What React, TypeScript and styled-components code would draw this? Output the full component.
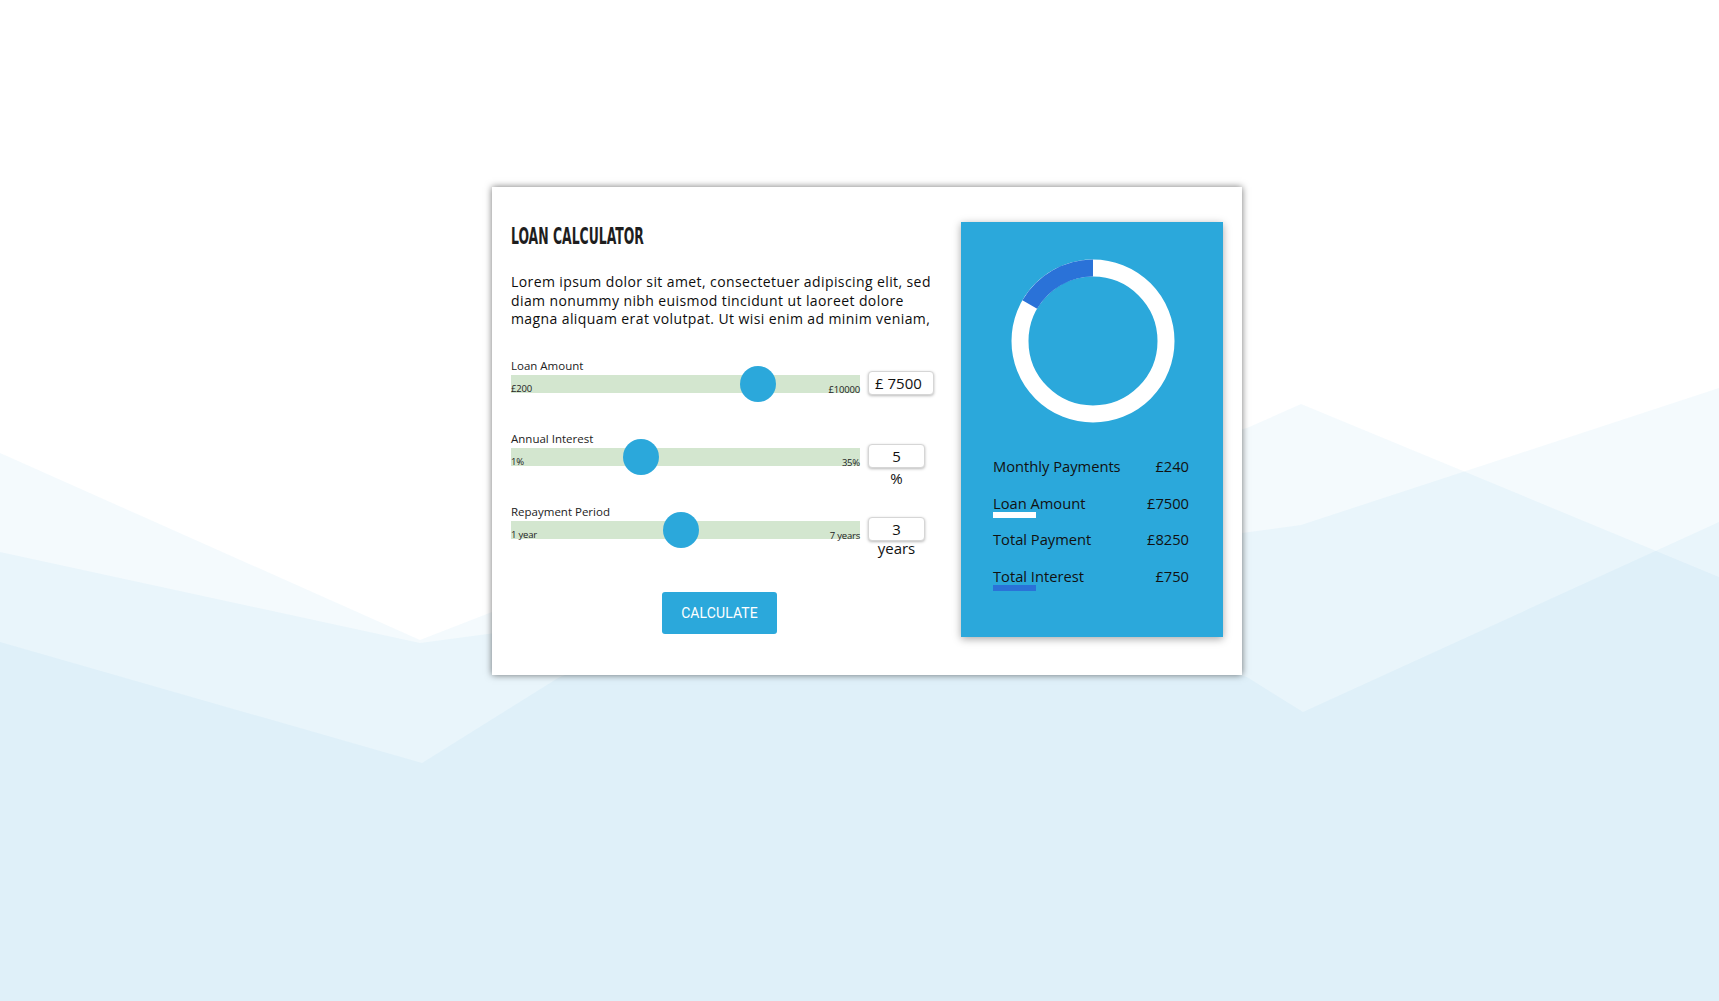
import React from "react";
import styled, { createGlobalStyle } from "styled-components";

const GlobalStyle = createGlobalStyle`
  html, body { margin: 0; padding: 0; }
  body {
    background: #ffffff;
    font-family: "Open Sans", "Noto Sans", sans-serif;
    color: #1f1f1f;
  }
  * { box-sizing: border-box; }
`;

const Page = styled.div`
  position: relative;
  min-height: 100vh;
  overflow: hidden;
  background: #ffffff;
`;

const Backdrop = styled.svg`
  position: absolute;
  inset: 0;
  width: 100%;
  height: 100%;
  pointer-events: none;
`;

const Stage = styled.main`
  position: relative;
  display: flex;
  justify-content: center;
  padding: 187px 0 0 15px;
`;

const Card = styled.section`
  width: 750px;
  display: grid;
  grid-template-columns: 422px 262px;
  column-gap: 28px;
  padding: 35px 19px 38px 19px;
  background: #ffffff;
  box-shadow: 0 0 7px rgba(0, 0, 0, 0.55);
`;

const Form = styled.div`
  display: flex;
  flex-direction: column;
`;

const Title = styled.h1`
  margin: 2px 0 0 0;
  font-family: "DejaVu Sans Condensed", "DejaVu Sans", sans-serif;
  font-stretch: condensed;
  font-weight: 700;
  font-size: 23px;
  line-height: 24px;
  color: #1e1e1e;
  letter-spacing: 0;
  transform: scaleX(0.6);
  transform-origin: left center;
  white-space: nowrap;
`;

const Intro = styled.p`
  margin: 25px 0 0 0;
  font-size: 14px;
  line-height: 18.5px;
  letter-spacing: 0.4px;
  color: #0d0d0d;
  white-space: nowrap;
`;

const Sliders = styled.div`
  margin-top: 31.5px;
  display: flex;
  flex-direction: column;
`;

const SliderBlock = styled.div`
  height: 73px;
`;

const FieldLabel = styled.div`
  font-size: 11.5px;
  line-height: 11px;
  color: #222;
`;

const SliderRow = styled.div`
  display: grid;
  grid-template-columns: 349px auto;
  column-gap: 8px;
  align-items: start;
  justify-content: start;
`;

const Track = styled.div`
  position: relative;
  margin-top: 4px;
  height: 18px;
  background: #d3e6cf;
`;

const ScaleLabels = styled.div`
  position: absolute;
  left: 0;
  right: 0;
  top: 9px;
  display: flex;
  justify-content: space-between;
  align-items: flex-start;
  font-size: 9.5px;
  line-height: 10px;
  color: #222;
  letter-spacing: -0.2px;
`;

const ScaleMax = styled.span`
  margin-top: 1px;
`;

const Thumb = styled.div`
  position: absolute;
  top: 50%;
  width: 36px;
  height: 36px;
  border-radius: 50%;
  background: #2ba8db;
  transform: translate(-50%, -50%);
`;

const ValueBox = styled.div<{ $width: number; $align: "left" | "center" }>`
  width: ${(p) => p.$width}px;
  height: 24px;
  padding: 0 6px;
  border: 1px solid #d6d6d6;
  border-radius: 4px;
  background: #fff;
  box-shadow: 0 1px 3px rgba(0, 0, 0, 0.28);
  font-size: 15px;
  line-height: 22px;
  color: #111;
  text-align: ${(p) => p.$align};
`;

const Suffix = styled.div<{ $shift: number }>`
  grid-column: 2;
  justify-self: center;
  margin-top: ${(p) => p.$shift}px;
  font-size: 15px;
  line-height: 18px;
  color: #111;
`;

const CalculateButton = styled.button`
  align-self: center;
  margin: 13px 5px 0 0;
  width: 115px;
  height: 42px;
  border: none;
  border-radius: 3px;
  background: #2ba8db;
  color: #ffffff;
  font-family: Roboto, "Liberation Sans", sans-serif;
  font-size: 14px;
  letter-spacing: 0.1px;
  cursor: pointer;
`;

const Panel = styled.aside`
  min-height: 415px;
  background: #2ba8db;
  box-shadow: 0 2px 8px rgba(0, 0, 0, 0.35);
  padding: 34px 34px 0 32px;
  display: flex;
  flex-direction: column;
`;

const DonutWrap = styled.div`
  align-self: center;
  margin-left: 3px;
  width: 170px;
  height: 170px;
`;

const Summary = styled.div`
  margin-top: 30px;
  display: grid;
  grid-auto-rows: 36.7px;
`;

const SummaryRow = styled.div`
  display: flex;
  justify-content: space-between;
  align-items: flex-start;
  font-size: 14.7px;
  line-height: 20px;
  color: #111;
`;

const SummaryLabel = styled.div`
  display: flex;
  flex-direction: column;
  align-items: flex-start;
`;

const KeySwatch = styled.span<{ $color: string }>`
  display: block;
  width: 43px;
  height: 6px;
  margin-top: -1px;
  background: ${(p) => p.$color};
`;

type SliderSpec = {
  label: string;
  min: string;
  max: string;
  value: string;
  pct: number;
  width: number;
  align: "left" | "center";
  suffix?: string;
  suffixShift?: number;
};

const sliders: SliderSpec[] = [
  { label: "Loan Amount", min: "£200", max: "£10000", value: "£ 7500", pct: 70.8, width: 66, align: "left" },
  { label: "Annual Interest", min: "1%", max: "35%", value: "5", pct: 37.2, width: 57, align: "center", suffix: "%", suffixShift: 1 },
  { label: "Repayment Period", min: "1 year", max: "7 years", value: "3", pct: 48.7, width: 57, align: "center", suffix: "years", suffixShift: -2 },
];

const summary = [
  { label: "Monthly Payments", value: "£240" },
  { label: "Loan Amount", value: "£7500", swatch: "#ffffff" },
  { label: "Total Payment", value: "£8250" },
  { label: "Total Interest", value: "£750", swatch: "#2a72d8" },
];

function Donut() {
  const c = 85;
  const r = 73;
  const angle = (60 * Math.PI) / 180;
  const ex = c - r * Math.sin(angle);
  const ey = c - r * Math.cos(angle);
  return (
    <svg width="170" height="170" viewBox="0 0 170 170">
      <circle cx={c} cy={c} r={r} fill="none" stroke="#ffffff" strokeWidth="17" />
      <path
        d={`M ${c} ${c - r} A ${r} ${r} 0 0 0 ${ex.toFixed(2)} ${ey.toFixed(2)}`}
        fill="none"
        stroke="#2a72d8"
        strokeWidth="17"
      />
    </svg>
  );
}

export default function App() {
  const layer = "rgba(118,190,232,0.08)";
  return (
    <Page>
      <GlobalStyle />
      <Backdrop viewBox="0 0 1719 1001" preserveAspectRatio="none">
        <polygon fill={layer} points="0,453 420,640 492,612 1247,428 1301,404 1719,577 1719,1001 0,1001" />
        <polygon fill={layer} points="0,552 420,643 1301,525 1719,388 1719,1001 0,1001" />
        <polygon fill={layer} points="0,642 422,763 558,678 830,560 1247,677 1303,712 1719,522 1719,1001 0,1001" />
      </Backdrop>
      <Stage>
        <Card>
          <Form>
            <Title>LOAN CALCULATOR</Title>
            <Intro>
              Lorem ipsum dolor sit amet, consectetuer adipiscing elit, sed
              <br />
              diam nonummy nibh euismod tincidunt ut laoreet dolore
              <br />
              magna aliquam erat volutpat. Ut wisi enim ad minim veniam,
            </Intro>
            <Sliders>
              {sliders.map((s) => (
                <SliderBlock key={s.label}>
                  <FieldLabel>{s.label}</FieldLabel>
                  <SliderRow>
                    <Track>
                      <ScaleLabels>
                        <span>{s.min}</span>
                        <ScaleMax>{s.max}</ScaleMax>
                      </ScaleLabels>
                      <Thumb style={{ left: `${s.pct}%` }} />
                    </Track>
                    <ValueBox $width={s.width} $align={s.align}>
                      {s.value}
                    </ValueBox>
                    {s.suffix && <Suffix $shift={s.suffixShift ?? 0}>{s.suffix}</Suffix>}
                  </SliderRow>
                </SliderBlock>
              ))}
            </Sliders>
            <CalculateButton>CALCULATE</CalculateButton>
          </Form>
          <Panel>
            <DonutWrap>
              <Donut />
            </DonutWrap>
            <Summary>
              {summary.map((row) => (
                <SummaryRow key={row.label}>
                  <SummaryLabel>
                    <span>{row.label}</span>
                    {row.swatch && <KeySwatch $color={row.swatch} />}
                  </SummaryLabel>
                  <span>{row.value}</span>
                </SummaryRow>
              ))}
            </Summary>
          </Panel>
        </Card>
      </Stage>
    </Page>
  );
}
